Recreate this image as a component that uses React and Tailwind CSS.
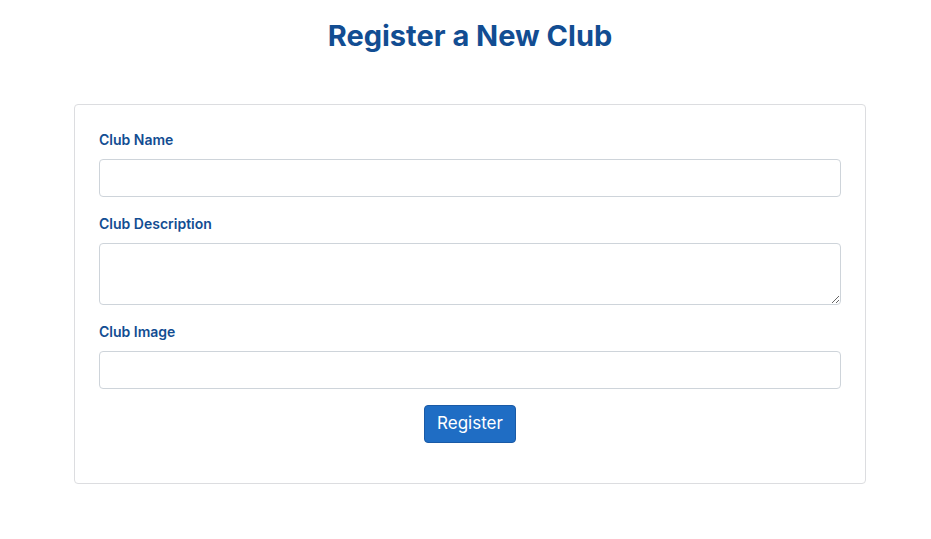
export default function App() {
  return (
    <div className="min-h-screen bg-white px-[74px] pt-[18px] font-['Inter',sans-serif]">
      <div className="w-[792px]">
        <h1 className="text-center text-[29px] font-bold leading-[36px] text-[#124d92]">Register a New Club</h1>

        <form className="mt-[50px] rounded border border-[#dcdde0] px-6 pt-[25px] pb-10">
          {fields.map((field, i) => (
            <div key={field.name} className={i === fields.length - 1 ? "mb-4" : "mb-[17px]"}>
              <label className="mb-[9px] block text-[14px] leading-5 font-semibold text-[#124d92]">{field.label}</label>
              {field.multiline ? (
                <textarea className="block h-[62px] w-full rounded border border-[#ced4da] px-3 py-1.5" />
              ) : (
                <input type="text" className="block h-[38px] w-full rounded border border-[#ced4da] px-3" />
              )}
            </div>
          ))}

          <div className="flex justify-center">
            <button
              type="button"
              className="h-[38px] w-[92px] rounded border border-[#1a5aa6] bg-[#1f6dc4] text-[17px] text-white"
            >
              Register
            </button>
          </div>
        </form>
      </div>
    </div>
  );
}

const fields = [
  { name: "name", label: "Club Name" },
  { name: "description", label: "Club Description", multiline: true },
  { name: "image", label: "Club Image" },
];
